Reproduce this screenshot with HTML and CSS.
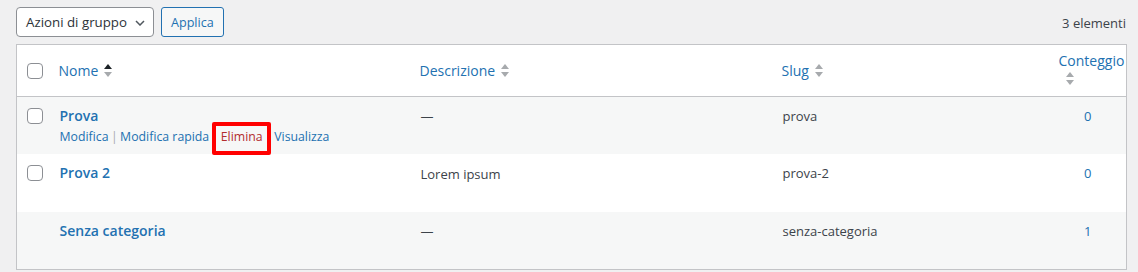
FILE: index.html
```html
<!DOCTYPE html>
<html lang="it">
<head>
<meta charset="utf-8">
<link rel="stylesheet" href="styles.css">
</head>
<body>
<div class="page">
  <div class="toolbar">
    <div class="select">
      <span>Azioni di gruppo</span>
      <svg class="chev" width="10" height="6" viewBox="0 0 10 6"><path d="M1 1l4 4 4-4" fill="none" stroke="#50575e" stroke-width="1.5"/></svg>
    </div>
    <button class="btn">Applica</button>
    <span class="count">3 elementi</span>
  </div>
  <table class="list">
    <colgroup>
      <col class="c-cb"><col class="c-name"><col class="c-desc"><col class="c-slug"><col class="c-posts">
    </colgroup>
    <thead>
      <tr>
        <th class="cb"><span class="check"></span></th>
        <th><a class="sort">Nome <span class="arrows asc"></span></a></th>
        <th><a class="sort">Descrizione <span class="arrows"></span></a></th>
        <th><a class="sort">Slug <span class="arrows"></span></a></th>
        <th class="posts-h"><a class="sort wrap">Conteggio <span class="arrows"></span></a></th>
      </tr>
    </thead>
    <tbody>
      <tr class="alt">
        <td class="cb"><span class="check"></span></td>
        <td><a class="title">Prova</a>
          <div class="actions"><a>Modifica</a> | <a>Modifica rapida</a> | <span class="mark"><a class="del">Elimina</a></span> | <a>Visualizza</a></div>
        </td>
        <td>—</td>
        <td>prova</td>
        <td class="num"><a>0</a></td>
      </tr>
      <tr>
        <td class="cb"><span class="check"></span></td>
        <td><a class="title">Prova 2</a>
          <div class="actions hidden"><a>Modifica</a> | <a>Modifica rapida</a></div>
        </td>
        <td class="desc2">Lorem ipsum</td>
        <td>prova-2</td>
        <td class="num"><a>0</a></td>
      </tr>
      <tr class="alt">
        <td class="cb"></td>
        <td><a class="title">Senza categoria</a>
          <div class="actions hidden"><a>Modifica</a></div>
        </td>
        <td>—</td>
        <td>senza-categoria</td>
        <td class="num"><a>1</a></td>
      </tr>
    </tbody>
  </table>
</div>
</body>
</html>
```
FILE: styles.css
```css
html, body {
  margin: 0;
  padding: 0;
  background: #f0f0f1;
  font-family: "Open Sans", "Noto Sans", sans-serif;
  font-size: 13px;
  color: #3c434a;
}
.page {
  padding: 7px 12px 0 16px;
}
.toolbar {
  display: flex;
  align-items: center;
  gap: 7px;
  height: 30px;
  margin-bottom: 7px;
}
.select {
  box-sizing: border-box;
  width: 138px;
  height: 30px;
  border: 1px solid #8c8f94;
  border-radius: 4px;
  background: #fff;
  display: flex;
  align-items: center;
  justify-content: space-between;
  padding: 0 8px 0 9px;
  font-size: 13.3px;
  color: #2c3338;
}
.chev { margin-top: 1px; }
.btn {
  box-sizing: border-box;
  height: 30px;
  padding: 0 9px;
  border: 1px solid #2271b1;
  border-radius: 3px;
  background: #f6f7f7;
  color: #2271b1;
  font-family: inherit;
  font-size: 12.6px;
}
.count {
  margin-left: auto;
  padding-top: 2px;
  font-size: 13px;
  color: #3c434a;
}
.list {
  width: 1110px;
  border: 1px solid #c3c4c7;
  border-collapse: collapse;
  table-layout: fixed;
  background: #fff;
}
.c-cb { width: 33px; }
.c-name { width: 361px; }
.c-desc { width: 362px; }
.c-slug { width: 277px; }
.c-posts { width: 77px; }
thead th {
  height: 52px;
  box-sizing: border-box;
  border-bottom: 1px solid #c3c4c7;
  text-align: left;
  font-weight: 400;
  padding: 0 9px;
  vertical-align: middle;
}
thead th.cb { padding: 0 0 0 10px; }
.sort {
  color: #2271b1;
  font-size: 14px;
  display: inline-flex;
  align-items: center;
  gap: 3px;
}
.sort .arrows { margin-left: 3px; }
.sort.wrap {
  display: flex;
  flex-direction: column;
  align-items: flex-start;
  gap: 2px;
  margin-top: -6px;
}
.sort.wrap .arrows { margin-left: 7px; }
.posts-h { padding: 0 0 0 9px !important; }
.arrows {
  display: inline-block;
  position: relative;
  width: 8px;
  height: 13px;
}
.arrows::before, .arrows::after {
  content: "";
  position: absolute;
  left: 0;
  border-left: 4px solid transparent;
  border-right: 4px solid transparent;
}
.arrows::before {
  top: 0;
  border-bottom: 5px solid #a7aaad;
}
.arrows::after {
  bottom: 0;
  border-top: 5px solid #a7aaad;
}
.arrows.asc::before { border-bottom-color: #1d2327; }
.check {
  display: block;
  box-sizing: border-box;
  width: 16px;
  height: 16px;
  border: 1px solid #8c8f94;
  border-radius: 4px;
  background: #fff;
}
tbody tr { background: #fff; }
tbody tr.alt { background: #f6f7f7; }
tbody td {
  vertical-align: top;
  padding: 9px 10px 7px 10px;
  line-height: 20px;
  font-size: 13px;
  color: #3c434a;
  height: 41px;
}
tbody td.cb { padding: 11px 0 0 10px; }
.title {
  color: #2271b1;
  font-weight: 600;
  font-size: 14px;
}
.desc2 { padding-top: 10px; }
.actions {
  color: #a7aaad;
  font-size: 12.3px;
  line-height: 21px;
  word-spacing: -0.8px;
}
.actions a { color: #2271b1; word-spacing: 0; }
.actions a.del { color: #b32d2e; }
.actions.hidden { visibility: hidden; }
.mark { position: relative; }
.mark::after {
  content: "";
  position: absolute;
  left: -9px;
  right: -8px;
  top: -6px;
  bottom: -10px;
  border: 4px solid #ff0000;
  border-radius: 2px;
}
td.num { text-align: center; padding-left: 0; padding-right: 0; }
td.num a { color: #2271b1; }
```
